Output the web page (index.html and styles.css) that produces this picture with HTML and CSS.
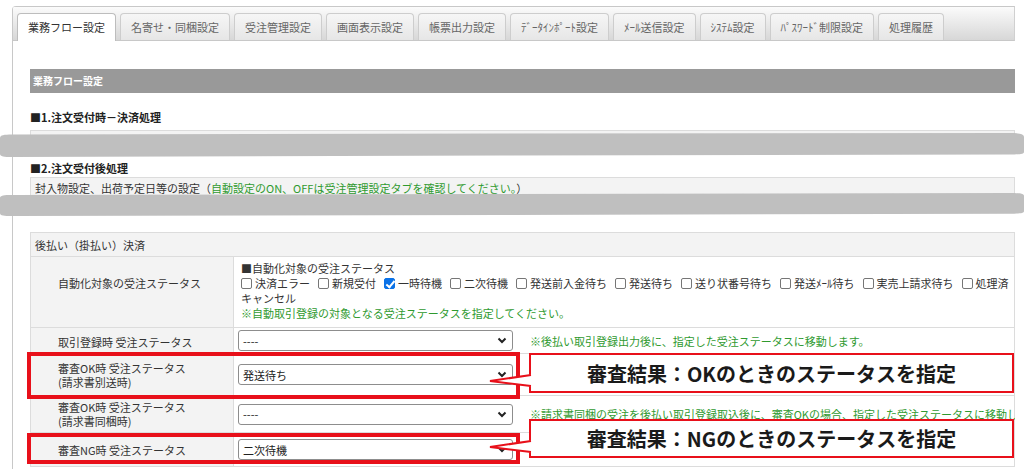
FILE: index.html
```html
<!DOCTYPE html>
<html lang="ja">
<head>
<meta charset="utf-8">
<title>業務フロー設定</title>
<link rel="stylesheet" href="styles.css">
</head>
<body>
<div class="page">
  <ul class="tabs">
    <li class="tab active">業務フロー設定</li>
    <li class="tab">名寄せ・同梱設定</li>
    <li class="tab">受注管理設定</li>
    <li class="tab">画面表示設定</li>
    <li class="tab">帳票出力設定</li>
    <li class="tab">ﾃﾞｰﾀｲﾝﾎﾟｰﾄ設定</li>
    <li class="tab">ﾒｰﾙ送信設定</li>
    <li class="tab">ｼｽﾃﾑ設定</li>
    <li class="tab">ﾊﾟｽﾜｰﾄﾞ制限設定</li>
    <li class="tab">処理履歴</li>
  </ul>
  <div class="content">
    <div class="bar">業務フロー設定</div>
    <h3 class="sec sec1">■1.注文受付時－決済処理</h3>
    <div class="box">決済処理の設定</div>
    <h3 class="sec sec2">■2.注文受付後処理</h3>
    <div class="box">封入物設定、出荷予定日等の設定（<span class="green">自動設定のON、OFFは受注管理設定タブを確認してください。</span>）</div>
    <table class="grid">
      <colgroup><col class="c1"><col class="c2"></colgroup>
      <tr class="r-head"><td colspan="2" class="head">後払い（掛払い）決済</td></tr>
      <tr class="r-auto">
        <th class="lbl lbl-auto">自動化対象の受注ステータス</th>
        <td class="val val-auto">
          <div>■自動化対象の受注ステータス</div>
          <div class="checks"><span class="cb first"></span>決済エラー<span class="cb"></span>新規受付<span class="cb on"></span>一時待機<span class="cb"></span>二次待機<span class="cb"></span>発送前入金待ち<span class="cb"></span>発送待ち<span class="cb"></span>送り状番号待ち<span class="cb"></span>発送ﾒｰﾙ待ち<span class="cb"></span>実売上請求待ち<span class="cb"></span>処理済<br>キャンセル</div>
          <div class="green">※自動取引登録の対象となる受注ステータスを指定してください。</div>
        </td>
      </tr>
      <tr class="r-reg">
        <th class="lbl">取引登録時 受注ステータス</th>
        <td class="val"><span class="sel"><span>----</span><svg class="chev" width="10" height="7" viewBox="0 0 10 7"><polyline points="1.5,1.5 5,5 8.5,1.5"/></svg></span><span class="green note">※後払い取引登録出力後に、指定した受注ステータスに移動します。</span></td>
      </tr>
      <tr class="r-ok1">
        <th class="lbl two">審査OK時 受注ステータス<br>(請求書別送時)</th>
        <td class="val"><span class="sel"><span>発送待ち</span><svg class="chev" width="10" height="7" viewBox="0 0 10 7"><polyline points="1.5,1.5 5,5 8.5,1.5"/></svg></span></td>
      </tr>
      <tr class="r-ok2">
        <th class="lbl two">審査OK時 受注ステータス<br>(請求書同梱時)</th>
        <td class="val"><span class="sel"><span>----</span><svg class="chev" width="10" height="7" viewBox="0 0 10 7"><polyline points="1.5,1.5 5,5 8.5,1.5"/></svg></span><span class="green note">※請求書同梱の受注を後払い取引登録取込後に、審査OKの場合、指定した受注ステータスに移動します。</span></td>
      </tr>
      <tr class="r-ng">
        <th class="lbl">審査NG時 受注ステータス</th>
        <td class="val"><span class="sel"><span>二次待機</span><svg class="chev" width="10" height="7" viewBox="0 0 10 7"><polyline points="1.5,1.5 5,5 8.5,1.5"/></svg></span></td>
      </tr>
    </table>
  </div>
</div>

<svg class="band band1" viewBox="0 0 1024 27" preserveAspectRatio="none"><path d="M0,6 C0,3 4,2.5 12,2.5 L500,1.5 L1010,1 C1020,1 1024,2 1024,5 L1024,20 C1024,22 1020,22.5 1010,22.5 L500,23.5 L12,25 C4,25 0,24.5 0,22 Z"/></svg>
<svg class="band band2" viewBox="0 0 1024 27" preserveAspectRatio="none"><path d="M0,6 C0,3.5 4,3 12,3 L500,2 L1010,1 C1020,1 1024,2 1024,4 L1024,20 C1024,22 1020,22.5 1010,22.5 L500,24 L12,25 C4,25 0,24.5 0,22 Z"/></svg>

<div class="rbox rbA"></div>
<div class="rbox rbB"></div>

<div class="callout coA">
  <svg class="ptr" width="44" height="16" viewBox="0 0 44 16"><polygon class="pf" points="1,8 42,1.5 45,1.5 45,13.5 42,13.5"/><polyline class="ps" points="42,2 1,8 42,13"/></svg>
  審査結果：OKのときのステータスを指定
</div>
<div class="callout coB">
  <svg class="ptr" width="44" height="16" viewBox="0 0 44 16"><polygon class="pf" points="1,8 42,1.5 45,1.5 45,13.5 42,13.5"/><polyline class="ps" points="42,2 1,8 42,13"/></svg>
  審査結果：NGのときのステータスを指定
</div>
</body>
</html>
```
FILE: styles.css
```css
* { box-sizing: border-box; margin: 0; padding: 0; }
html, body { width: 1024px; height: 469px; overflow: hidden; }
body {
  font-family: "Noto Sans CJK JP", "Noto Sans", sans-serif;
  font-size: 11px;
  color: #333;
  background: #fff;
  position: relative;
}
.page {
  margin: 6px 0 0 12px;
  width: 1003px;
  height: 463px;
  border-left: 1px solid #c8c8c8;
  border-top-left-radius: 4px;
  overflow: hidden;
}
.tabs {
  list-style: none;
  display: flex;
  align-items: flex-end;
  gap: 4px;
  height: 35px;
  padding-left: 4px;
  border-top: 1px solid #c8c8c8;
  border-bottom: 1px solid #c8c8c8;
  border-right: 1px solid #d0d0d0;
  background: linear-gradient(#fbfbfb, #d7d7d7);
}
.tab {
  height: 27px;
  line-height: 26px;
  padding: 0 10px;
  border: 1px solid #cdcdcd;
  border-bottom: none;
  border-radius: 4px 4px 0 0;
  background: linear-gradient(#f6f6f6, #e6e6e6);
  color: #666;
  white-space: nowrap;
}
.tab.active {
  height: 28px;
  margin-bottom: -1px;
  background: #fff;
  color: #333;
  border-color: #bdbdbd;
}
.content { padding: 28px 0 0 17px; }
.bar {
  height: 24px;
  line-height: 24px;
  background: #999;
  color: #fff;
  font-size: 10px;
  font-weight: bold;
  padding-left: 3px;
}
.sec { font-size: 11px; font-weight: bold; line-height: 16px; color: #222; }
.sec1 { margin: 16px 0 5px; }
.sec2 { margin: 8px 0 1px; }
.box {
  height: 22px;
  line-height: 20px;
  border: 1px solid #dcdcdc;
  background: #f3f3f3;
  padding-left: 4px;
  white-space: nowrap;
}
.green { color: #2f9a2f; }

.grid {
  margin-top: 33px;
  width: 985px;
  border-collapse: collapse;
  table-layout: fixed;
}
.c1 { width: 203px; }
.grid td, .grid th { border: 1px solid #dcdcdc; }
.head { background: #f3f3f3; padding-left: 4px; }
.r-head { height: 24px; }
.r-auto { height: 71px; }
.r-reg { height: 26px; }
.r-ok1 { height: 42px; }
.r-ok2 { height: 37px; }
.r-ng { height: 34px; }
.lbl {
  background: #f3f3f3;
  font-weight: normal;
  text-align: left;
  padding-left: 27px;
  vertical-align: middle;
  white-space: nowrap;
}
.lbl.two { line-height: 14px; }
.lbl-auto { vertical-align: top; padding-top: 19px; line-height: 15px; }
.r-reg .lbl { padding-top: 3px; }
.val { padding-left: 4px; white-space: nowrap; vertical-align: middle; }
.val-auto { vertical-align: top; padding: 4px 0 6px 7px; line-height: 15px; }
.checks { white-space: nowrap; }
.cb {
  display: inline-block;
  position: relative;
  width: 11px;
  height: 11px;
  border: 1px solid #767676;
  border-radius: 2px;
  background: #fff;
  margin: 0 3px 0 8px;
  vertical-align: -1px;
}
.cb.first { margin-left: 0; }
.cb.on { background: #0b72e7; border-color: #0b72e7; }
.cb.on::after {
  content: "";
  position: absolute;
  left: 3px;
  top: 0;
  width: 3px;
  height: 7px;
  border: solid #fff;
  border-width: 0 2px 2px 0;
  transform: rotate(40deg);
}
.sel {
  display: inline-flex;
  align-items: center;
  justify-content: space-between;
  width: 275px;
  height: 21px;
  border: 1px solid #8d8d8d;
  border-radius: 3px;
  padding: 0 5px 0 4px;
  vertical-align: middle;
  background: #fff;
  color: #222;
}
.chev polyline { fill: none; stroke: #222; stroke-width: 2; }
.note { margin-left: 17px; vertical-align: middle; }

.band { position: absolute; left: 0; width: 1024px; }
.band path { fill: #bfbfbf; }
.band1 { top: 132px; height: 27px; }
.band2 { top: 192px; height: 26px; }

.rbox { position: absolute; border: 4px solid #e8101a; }
.rbA { left: 27px; top: 352px; width: 493px; height: 47px; }
.rbB { left: 27px; top: 433px; width: 493px; height: 31px; }

.callout {
  position: absolute;
  left: 529px;
  width: 485px;
  border: 2px solid #e8101a;
  background: #fff;
  display: flex;
  align-items: center;
  justify-content: center;
  font-size: 20px;
  font-weight: bold;
  color: #1a1a1a;
  white-space: nowrap;
}
.coA { top: 353px; height: 40px; }
.coB { top: 419px; height: 39px; }
.ptr { position: absolute; left: -42px; top: 18px; overflow: visible; }
.ptr .pf { fill: #fff; }
.ptr .ps { fill: none; stroke: #e8101a; stroke-width: 2; }
```
